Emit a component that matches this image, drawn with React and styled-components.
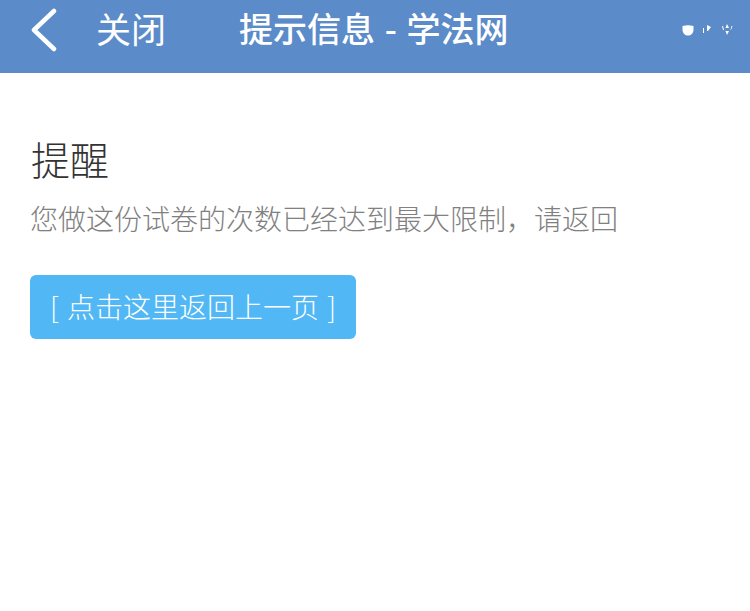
import React from "react";
import styled, { createGlobalStyle } from "styled-components";

const FONT = `"Noto Sans CJK SC", "Noto Sans", sans-serif`;

const GlobalStyle = createGlobalStyle`
  html, body {
    margin: 0;
    padding: 0;
    background: #fff;
    font-family: ${FONT};
  }
`;

const Page = styled.div`
  width: 750px;
  height: 611px;
  overflow: hidden;
  background: #fff;
`;

const Header = styled.header`
  height: 73px;
  background: #5b8bc9;
  color: #fff;
  display: flex;
  align-items: center;
  padding: 0 17px 14px 30px;
  box-sizing: border-box;
`;

const BackIcon = styled.svg`
  width: 28px;
  height: 44px;
  flex: none;
`;

const CloseLabel = styled.span`
  font-size: 35px;
  font-weight: 400;
  line-height: 44px;
  margin: 0 0 4px 38px;
`;

const HeaderTitle = styled.h1`
  font-size: 34px;
  font-weight: 500;
  line-height: 44px;
  margin: 0 0 4px 73px;
  word-spacing: 2px;
`;

const StatusIcons = styled.div`
  margin-left: auto;
  display: flex;
  align-items: center;
  gap: 8px;
`;

const StatusIcon = styled.svg`
  width: ${(p) => p.$w}px;
  height: 14px;
`;

const Content = styled.main`
  padding: 59px 30px 0;
`;

const Heading = styled.h2`
  font-size: 39px;
  font-weight: 300;
  line-height: 52px;
  color: #333;
  margin: 0 0 0 1px;
`;

const Message = styled.p`
  font-size: 28px;
  font-weight: 300;
  line-height: 40px;
  color: #808080;
  margin: 14px 0 0;
`;

const BackButton = styled.button`
  display: block;
  width: 326px;
  height: 64px;
  margin-top: 37px;
  padding: 0 0 2px;
  border: 0;
  border-radius: 6px;
  background: #51b8f5;
  color: #fff;
  font-family: ${FONT};
  font-size: 28px;
  font-weight: 300;
  word-spacing: 2px;
  text-align: center;
`;

export default function App() {
  return (
    <Page>
      <GlobalStyle />
      <Header>
        <BackIcon viewBox="0 0 28 44" fill="none">
          <path d="M24 3 L4 22 L24 41" stroke="#fff" strokeWidth="4.5" strokeLinecap="round" strokeLinejoin="round" />
        </BackIcon>
        <CloseLabel>关闭</CloseLabel>
        <HeaderTitle>提示信息 - 学法网</HeaderTitle>
        <StatusIcons>
          <StatusIcon $w={12} viewBox="0 0 12 14">
            <path d="M0.5 3 Q6 1.5 11.5 3 V7 A5.5 5.5 0 0 1 0.5 7 Z" fill="#fff" />
          </StatusIcon>
          <StatusIcon $w={11} viewBox="0 0 11 14">
            <path d="M1 5 H2 V10 H1 Z M5 2 L9 4 L6 8 L5 8 Z" fill="#fff" />
          </StatusIcon>
          <StatusIcon $w={12} viewBox="0 0 12 14">
            <path d="M6 1 L8 5 L4.5 5 Z M4.5 8 L8 8 L6 12 Z M1 3 L2 3 L3 7 L2 7 Z M10.5 3 L11.5 3 L10 7 L9.5 7 Z" fill="#fff" />
          </StatusIcon>
        </StatusIcons>
      </Header>
      <Content>
        <Heading>提醒</Heading>
        <Message>您做这份试卷的次数已经达到最大限制，请返回</Message>
        <BackButton type="button">[ 点击这里返回上一页 ]</BackButton>
      </Content>
    </Page>
  );
}
